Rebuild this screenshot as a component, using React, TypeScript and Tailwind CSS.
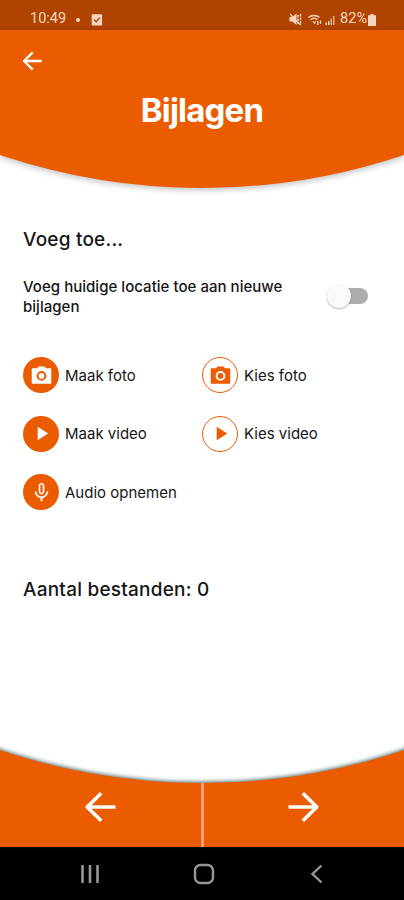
import type { ReactNode } from 'react'
import { MdMicNone, MdPlayArrow } from 'react-icons/md'

interface ArrowProps {
  className: string
  strokeWidth?: number
}

function ArrowLeft({ className, strokeWidth = 3.6 }: ArrowProps) {
  return (
    <svg viewBox="0 0 32 32" className={className} fill="none" stroke="currentColor" strokeWidth={strokeWidth} strokeLinejoin="round">
      <path d="M17.2 2.2 3.2 16l14 13.8M4 16h27.500" />
    </svg>
  )
}

function CameraIcon() {
  return (
    <svg viewBox="0 0 24 24" className="h-[23px] w-[23px]" fill="currentColor" fillRule="evenodd">
      <path d="M9 2.500h6L16.800 4.500H21.500a.7.7 0 0 1 .7.7V19.800a.7.7 0 0 1-.7.7H2.500a.7.7 0 0 1-.7-.7V5.200a.7.7 0 0 1 .7-.7H7.200ZM12 7.300a5.100 5.100 0 1 0 0 10.200 5.100 5.100 0 0 0 0-10.200ZM12 9.400a3 3 0 1 1 0 6 3 3 0 0 1 0-6Z" />
    </svg>
  )
}

function StatusBar() {
  return (
    <div className="flex h-[30px] items-center bg-[#b04300] pt-[9px] pr-[28px] pb-0 pl-[30px] font-[Roboto] text-[14.5px] leading-none text-[#f6d6c2]">
      <span>10:49</span>
      <span className="ml-[10px] h-1 w-1 rounded-full bg-[#f6d6c2]" />
      <svg viewBox="0 0 12 12" className="ml-[11px] h-3 w-3" fill="none">
        <rect x="0.7" y="0.2" width="10.4" height="11.4" rx="1" fill="#f6d6c2" />
        <path d="m3 5.5 2.2 2.2L9 3.6" stroke="#b04300" strokeWidth="1.3" />
      </svg>
      {/* Muted speaker */}
      <svg viewBox="0 0 13 13" className="-mt-px mr-0 ml-auto h-[13px] w-[13px]" fill="none" stroke="#f6d6c2">
        <path d="M.5 4h3l4-3.500v11.500L3.500 8.500h-3z" fill="#f6d6c2" stroke="none" />
        <path d="m1 1 10.500 11" strokeWidth="1.2" />
        <path d="M9 2v9M11.500 1v11" strokeWidth="1.4" strokeDasharray="2.5 1" />
      </svg>
      {/* Wifi with traffic arrows */}
      <svg viewBox="0 0 14 12" className="ml-[6px] h-3 w-[14px]" fill="none" stroke="#f6d6c2" strokeWidth="1.4">
        <path d="M.5 3.500C3.300.8 8.700.8 11.500 3.500M2.600 5.700c2-1.800 4.800-1.800 6.800 0" />
        <path d="M4.500 7.500h4L6.500 10z" fill="#f6d6c2" stroke="none" />
        <path d="M9.800 7v4M12.500 6.500V10" strokeWidth="1.3" />
      </svg>
      <svg viewBox="0 0 10 10" className="ml-[3px] h-[10px] w-[10px]" fill="#f6d6c2">
        <path d="M.5 7.500h1.500V10H.5zM3 6h1.500v4H3z" />
        <path d="M5.500 3.500h1.500V10H5.500zM8 1h1.500v9H8z" opacity="0.7" />
      </svg>
      <span className="ml-[5px]">82%</span>
      <svg viewBox="0 0 8 12" className="ml-px h-3 w-2" fill="#f6d6c2">
        <path d="M2.500 0h3v1.300H8V12H0V1.300h2.500z" />
      </svg>
    </div>
  )
}

function Header() {
  return (
    <header className="relative h-[125px]">
      {/* Bar with a curved bottom edge */}
      <svg
        viewBox="0 0 404 159"
        className="absolute top-0 left-0 h-[159px] w-full drop-shadow-[0_2px_3px_rgba(0,0,0,0.25)]"
        fill="#eb5b00"
      >
        <path d="M0 0H404V125A635 635 0 0 1 0 125Z" />
      </svg>
      <button aria-label="Terug" className="absolute top-[21px] left-[22px] text-white">
        <ArrowLeft className="h-5 w-5" strokeWidth={3.8} />
      </button>
      <h1 className="relative pt-[59px] text-center text-[33px] leading-[42px] font-bold tracking-[-0.8px] text-white">
        Bijlagen
      </h1>
    </header>
  )
}

interface ActionProps {
  label: string
  outlined?: boolean
  children: ReactNode
}

function Action({ label, outlined = false, children }: ActionProps) {
  return (
    <button className="flex h-9 items-center gap-[6px] text-left">
      <span
        className={
          outlined
            ? 'flex h-9 w-9 items-center justify-center rounded-full border-[1.5px] border-[#eb5b00] text-[#eb5b00]'
            : 'flex h-9 w-9 items-center justify-center rounded-full bg-[#eb5b00] text-white'
        }
      >
        {children}
      </span>
      <span className="pt-[2px] text-[15px] whitespace-nowrap">{label}</span>
    </button>
  )
}

function Footer() {
  return (
    <footer className="relative h-[97px]">
      {/* Bar with a scooped top edge, shaded onto the page above */}
      <svg viewBox="0 0 404 97" className="absolute top-0 left-0 h-[97px] w-full overflow-visible">
        <path
          d="M-20 -7A635 635 0 0 0 424 -7V97H-20Z"
          fill="#eb5b00"
          className="drop-shadow-[0_-1px_2px_rgba(20,60,60,0.75)]"
        />
      </svg>
      <div className="relative flex h-full pt-[33px] text-white">
        <button aria-label="Vorige" className="flex flex-1 justify-center pt-2">
          <ArrowLeft className="h-8 w-8" />
        </button>
        <span className="w-[3px] bg-[#f5a070]" />
        <button aria-label="Volgende" className="flex flex-1 justify-center pt-2">
          <ArrowLeft className="h-8 w-8 rotate-180" />
        </button>
      </div>
    </footer>
  )
}

function NavigationBar() {
  return (
    <nav className="flex h-[53px] items-center justify-between bg-black pr-[77px] pl-[80px] text-[#969696]">
      <svg viewBox="0 0 20 20" className="h-5 w-5" stroke="currentColor" strokeWidth="2.6">
        <path d="M2.500 1v18M10 1v18M17.500 1v18" />
      </svg>
      <svg viewBox="0 0 22 22" className="h-[22px] w-[22px]" fill="none" stroke="currentColor" strokeWidth="2.4">
        <rect x="2" y="2" width="18" height="18" rx="5.5" />
      </svg>
      <svg viewBox="0 0 20 20" className="h-5 w-5" fill="none" stroke="currentColor" strokeWidth="2.4">
        <path d="M14.500 1.500 5.500 10l9 8.500" />
      </svg>
    </nav>
  )
}

export default function App() {
  return (
    <div className="flex h-[900px] w-full flex-col overflow-hidden bg-white font-[Inter,sans-serif] text-[#161616]">
      <StatusBar />
      <Header />
      <main className="flex-1 px-[23px] pt-[73px]">
        <h2 className="text-[19px] leading-6 font-medium tracking-[0.2px]">Voeg toe...</h2>
        <div className="mt-[25px] flex items-center justify-between">
          <p className="w-[275px] text-[15px] leading-[19.5px] font-medium tracking-[0.03px]">
            Voeg huidige locatie toe aan nieuwe bijlagen
          </p>
          <button role="switch" aria-checked="false" className="relative mr-[13px] mb-px h-4 w-[36px] rounded-full bg-[#adadad]">
            <span className="absolute -top-1 -left-[5px] h-6 w-6 rounded-full bg-[#fafafa] shadow-[0_1px_2px_rgba(0,0,0,0.3)]" />
          </button>
        </div>
        <div className="mt-[41px] grid grid-cols-[179px_179px] gap-y-[22.5px]">
          <Action label="Maak foto">
            <CameraIcon />
          </Action>
          <Action label="Kies foto" outlined>
            <CameraIcon />
          </Action>
          <Action label="Maak video">
            <MdPlayArrow size={23} />
          </Action>
          <Action label="Kies video" outlined>
            <MdPlayArrow size={23} />
          </Action>
          <Action label="Audio opnemen">
            <MdMicNone size={23} />
          </Action>
        </div>
        <p className="mt-[68px] text-[19px] leading-6 font-medium tracking-[0.22px]">Aantal bestanden: 0</p>
      </main>
      <Footer />
      <NavigationBar />
    </div>
  )
}
